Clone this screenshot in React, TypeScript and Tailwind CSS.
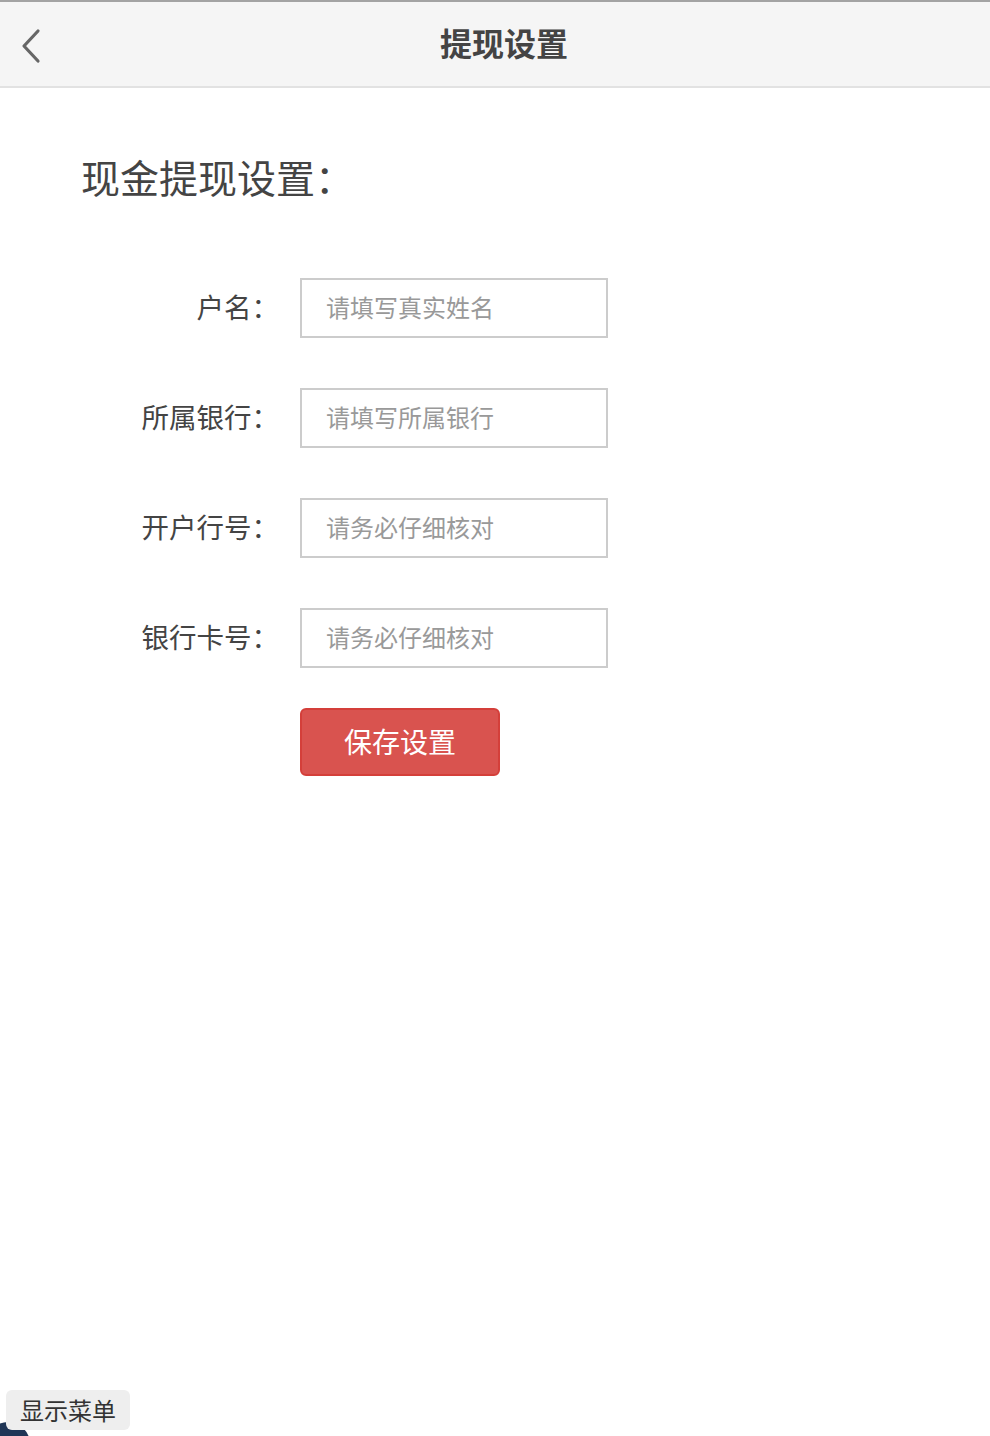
import React from 'react';

const FONT = { fontFamily: '"Noto Sans CJK SC", "Noto Sans", sans-serif' };

const fields = [
  { label: '户名：', placeholder: '请填写真实姓名' },
  { label: '所属银行：', placeholder: '请填写所属银行' },
  { label: '开户行号：', placeholder: '请务必仔细核对' },
  { label: '银行卡号：', placeholder: '请务必仔细核对' },
];

export default function App() {
  return (
    <div className="relative min-h-[1436px] bg-white text-[#333]" style={FONT}>
      {/* Header */}
      <div className="border-t-2 border-[#a3a3a3] border-b-2 border-b-[#e2e2e2] bg-[#f5f5f5] h-[88px] flex items-center relative">
        <button className="absolute left-[18px] top-[24px] w-[26px] h-[40px] flex items-center justify-center">
          <svg width="22" height="36" viewBox="0 0 22 36" fill="none">
            <path d="M18 3 L4 18 L18 33" stroke="#666" strokeWidth="3.2" strokeLinecap="round" strokeLinejoin="round" />
          </svg>
        </button>
        <h1 className="w-full text-center pl-[18px] pb-[4px] text-[32px] font-bold text-[#444] leading-none">提现设置</h1>
      </div>

      {/* Body */}
      <div className="pt-[62px] pl-[81px]">
        <h2 className="text-[39px] leading-[52px] text-[#444]">现金提现设置：</h2>
      </div>

      <div className="mt-[76px] flex flex-col gap-[50px]">
        {fields.map((f) => (
          <div key={f.label} className="flex items-center">
            <label className="w-[279px] pb-[2px] text-right text-[27.5px] text-[#444]">{f.label}</label>
            <input
              placeholder={f.placeholder}
              className="ml-[21px] w-[308px] h-[60px] border-2 border-[#ccc] px-[24px] pb-[3px] text-[24px] text-[#333] placeholder:text-[#999] outline-none"
              style={FONT}
            />
          </div>
        ))}
      </div>

      <div className="pl-[300px] mt-[40px]">
        <button className="w-[200px] h-[68px] rounded-[6px] bg-[#d9534f] border-2 border-[#d43f3a] text-white text-[28px] pb-[2px]">
          保存设置
        </button>
      </div>

      {/* Bottom menu toggle */}
      <div className="absolute left-[-14px] bottom-[-30px] w-[44px] h-[44px] rounded-full bg-[#1f3556]" />
      <button className="absolute left-[6px] bottom-[6px] w-[124px] h-[40px] rounded-[6px] bg-[#eee] text-[24px] text-[#333] leading-none">
        显示菜单
      </button>
    </div>
  );
}
